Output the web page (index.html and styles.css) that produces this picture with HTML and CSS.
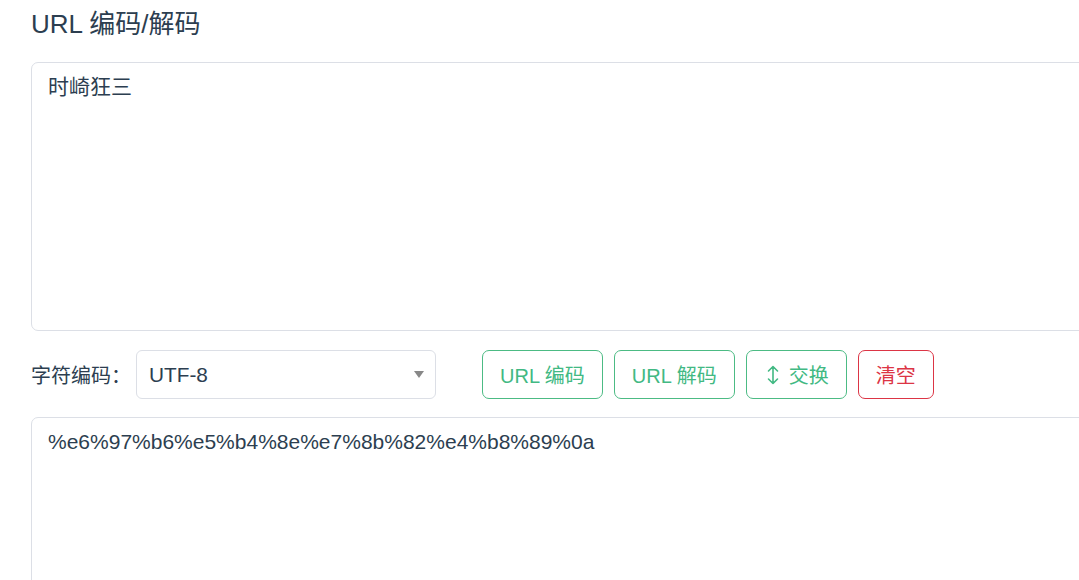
FILE: index.html
```html
<!DOCTYPE html>
<html lang="zh-CN">
<head>
<meta charset="utf-8">
<title>URL 编码/解码</title>
<link rel="stylesheet" href="styles.css">
</head>
<body>
<div class="page">
  <h2 class="title">URL 编码/解码</h2>
  <textarea class="box box-in">时崎狂三</textarea>
  <div class="toolbar">
    <label class="label">字符编码：</label>
    <div class="select">
      <span class="select-value">UTF-8</span>
      <span class="caret"></span>
    </div>
    <div class="buttons">
      <button class="btn btn-green">URL 编码</button>
      <button class="btn btn-green">URL 解码</button>
      <button class="btn btn-green btn-swap"><svg class="swap" width="12" height="20" viewBox="0 0 12 20"><path d="M6 1.5V18.5M1.5 6L6 1.5L10.5 6M1.5 14L6 18.5L10.5 14" fill="none" stroke="currentColor" stroke-width="1.6" stroke-linecap="round" stroke-linejoin="round"/></svg><span>交换</span></button>
      <button class="btn btn-red">清空</button>
    </div>
  </div>
  <textarea class="box box-out">%e6%97%b6%e5%b4%8e%e7%8b%82%e4%b8%89%0a</textarea>
</div>
</body>
</html>
```
FILE: styles.css
```css
html, body {
  margin: 0;
  padding: 0;
  background: #fff;
  overflow: hidden;
}
body {
  font-family: "Liberation Sans", "Noto Sans CJK SC", sans-serif;
  color: #2c3e50;
}
.page {
  padding: 0 0 0 31px;
  width: 1120px;
}
.title {
  margin: 0;
  padding-top: 7px;
  font-size: 26px;
  font-weight: normal;
  line-height: 34px;
  color: #2c3e50;
}
.box {
  display: block;
  box-sizing: border-box;
  width: 1090px;
  margin: 0;
  border: 1px solid #dcdfe6;
  border-radius: 7px;
  padding: 8px 16px;
  font-family: "Liberation Sans", "Noto Sans CJK SC", sans-serif;
  font-size: 21px;
  line-height: 1.5;
  color: #2c3e50;
  resize: none;
  outline: none;
  background: #fff;
}
.box-in {
  margin-top: 21px;
  height: 269px;
}
.box-out {
  height: 200px;
}
.toolbar {
  display: flex;
  align-items: center;
  margin: 19px 0 18px;
  height: 49px;
}
.label {
  font-size: 20px;
  color: #2c3e50;
  width: 105px;
}
.select {
  box-sizing: border-box;
  width: 300px;
  height: 49px;
  border: 1px solid #dcdfe6;
  border-radius: 6px;
  display: flex;
  align-items: center;
  justify-content: space-between;
  padding: 0 10px 0 12px;
}
.select-value {
  font-size: 20.8px;
  color: #2c3e50;
}
.caret {
  width: 0;
  height: 0;
  border-left: 5px solid transparent;
  border-right: 5px solid transparent;
  border-top: 7px solid #888;
  margin-right: 1px;
}
.buttons {
  display: flex;
  gap: 11px;
  margin-left: 46px;
}
.btn {
  box-sizing: border-box;
  height: 49px;
  padding: 0 17px;
  border-radius: 7px;
  background: #fff;
  font-family: "Liberation Sans", "Noto Sans CJK SC", sans-serif;
  font-size: 20px;
  display: flex;
  align-items: center;
  gap: 10px;
  cursor: pointer;
}
.btn-swap {
  padding: 0 17px 0 20px;
}
.btn-green {
  border: 1px solid #4cbb84;
  color: #42b983;
}
.btn-red {
  border: 1px solid #dc3545;
  color: #dc3545;
}
.swap {
  display: block;
}
```
